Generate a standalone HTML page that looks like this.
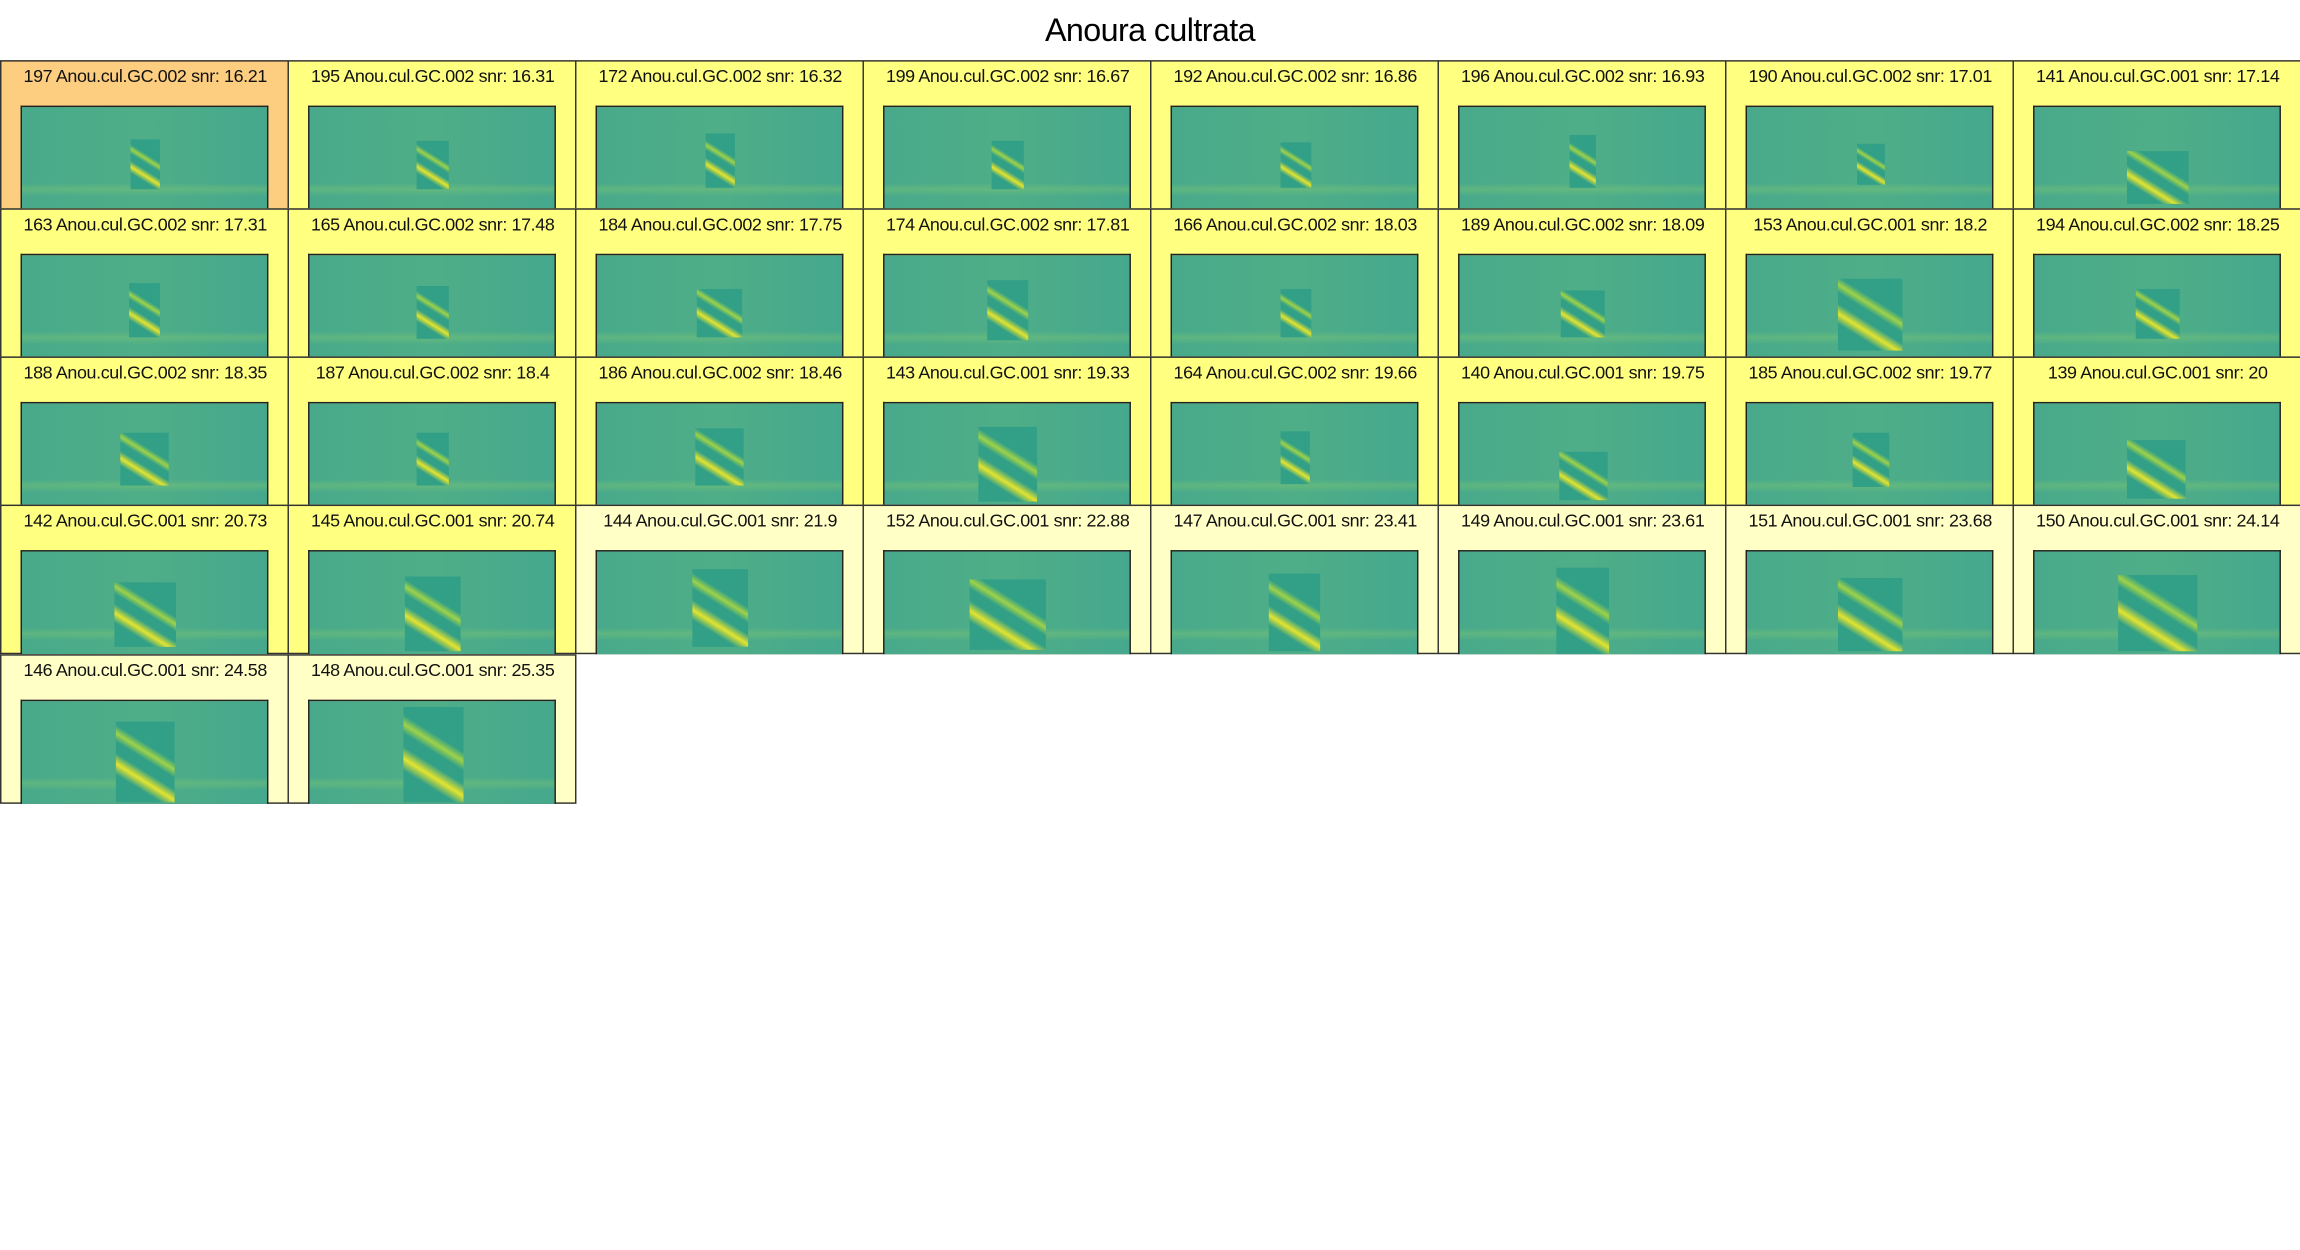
<!DOCTYPE html>
<html><head><meta charset="utf-8"><style>
html,body{margin:0;padding:0;background:#fff;width:2300px;height:1250px;overflow:hidden}
#w{position:absolute;left:0;top:0;width:1568px;height:852px;transform:scale(1.46684);transform-origin:0 0;font-family:"Liberation Sans",sans-serif}
h1{position:absolute;left:0;top:8px;width:1568px;margin:0;text-align:center;font-weight:normal;font-size:22px;color:#000;letter-spacing:-0.4px}
.c{position:absolute;width:195px;height:100px;border:0.7px solid #333;background:#ffff80}
.o{background:#fdcd80}.l{background:#ffffc6}
.t{position:absolute;left:0;top:3px;width:196px;text-align:center;font-size:12.2px;letter-spacing:-0.25px;color:#111;white-space:nowrap}
.s{position:absolute;left:13px;top:29.5px;width:167px;height:70px;border:0.7px solid #222;border-bottom:none;
background:linear-gradient(180deg,rgba(255,255,255,0) 74%,rgba(170,220,90,.22) 80%,rgba(0,0,0,0) 87%),linear-gradient(90deg,#48aa8b,#4fae88 50%,#45a88d);overflow:hidden}
.i{position:absolute;background:
linear-gradient(32deg,rgba(0,0,0,0) 24%,#e4e42e 33%,rgba(0,0,0,0) 42%),
linear-gradient(32deg,rgba(0,0,0,0) 52%,#9fd248 59%,rgba(0,0,0,0) 66%),
#32a087}
</style></head><body><div id="w">
<h1>Anoura cultrata</h1>

<div class="c o" style="left:0;top:41px"><div class="t">197 Anou.cul.GC.002 snr: 16.21</div><div class="s"><div class="i" style="left:74px;top:22px;width:20px;height:34px"></div></div></div>
<div class="c" style="left:196px;top:41px"><div class="t">195 Anou.cul.GC.002 snr: 16.31</div><div class="s"><div class="i" style="left:73px;top:23px;width:22px;height:33px"></div></div></div>
<div class="c" style="left:392px;top:41px"><div class="t">172 Anou.cul.GC.002 snr: 16.32</div><div class="s"><div class="i" style="left:74px;top:18px;width:20px;height:37px"></div></div></div>
<div class="c" style="left:588px;top:41px"><div class="t">199 Anou.cul.GC.002 snr: 16.67</div><div class="s"><div class="i" style="left:73px;top:23px;width:22px;height:33px"></div></div></div>
<div class="c" style="left:784px;top:41px"><div class="t">192 Anou.cul.GC.002 snr: 16.86</div><div class="s"><div class="i" style="left:74px;top:24px;width:21px;height:31px"></div></div></div>
<div class="c" style="left:980px;top:41px"><div class="t">196 Anou.cul.GC.002 snr: 16.93</div><div class="s"><div class="i" style="left:75px;top:19px;width:18px;height:36px"></div></div></div>
<div class="c" style="left:1176px;top:41px"><div class="t">190 Anou.cul.GC.002 snr: 17.01</div><div class="s"><div class="i" style="left:75px;top:25px;width:19px;height:28px"></div></div></div>
<div class="c" style="left:1372px;top:41px"><div class="t">141 Anou.cul.GC.001 snr: 17.14</div><div class="s"><div class="i" style="left:63px;top:30px;width:42px;height:36px"></div></div></div>

<div class="c" style="left:0;top:142px"><div class="t">163 Anou.cul.GC.002 snr: 17.31</div><div class="s"><div class="i" style="left:73px;top:19px;width:21px;height:37px"></div></div></div>
<div class="c" style="left:196px;top:142px"><div class="t">165 Anou.cul.GC.002 snr: 17.48</div><div class="s"><div class="i" style="left:73px;top:21px;width:22px;height:36px"></div></div></div>
<div class="c" style="left:392px;top:142px"><div class="t">184 Anou.cul.GC.002 snr: 17.75</div><div class="s"><div class="i" style="left:68px;top:23px;width:31px;height:33px"></div></div></div>
<div class="c" style="left:588px;top:142px"><div class="t">174 Anou.cul.GC.002 snr: 17.81</div><div class="s"><div class="i" style="left:70px;top:17px;width:28px;height:41px"></div></div></div>
<div class="c" style="left:784px;top:142px"><div class="t">166 Anou.cul.GC.002 snr: 18.03</div><div class="s"><div class="i" style="left:74px;top:23px;width:21px;height:33px"></div></div></div>
<div class="c" style="left:980px;top:142px"><div class="t">189 Anou.cul.GC.002 snr: 18.09</div><div class="s"><div class="i" style="left:69px;top:24px;width:30px;height:32px"></div></div></div>
<div class="c" style="left:1176px;top:142px"><div class="t">153 Anou.cul.GC.001 snr: 18.2</div><div class="s"><div class="i" style="left:62px;top:16px;width:44px;height:49px"></div></div></div>
<div class="c" style="left:1372px;top:142px"><div class="t">194 Anou.cul.GC.002 snr: 18.25</div><div class="s"><div class="i" style="left:69px;top:23px;width:30px;height:34px"></div></div></div>

<div class="c" style="left:0;top:243px"><div class="t">188 Anou.cul.GC.002 snr: 18.35</div><div class="s"><div class="i" style="left:67px;top:20px;width:33px;height:36px"></div></div></div>
<div class="c" style="left:196px;top:243px"><div class="t">187 Anou.cul.GC.002 snr: 18.4</div><div class="s"><div class="i" style="left:73px;top:20px;width:22px;height:36px"></div></div></div>
<div class="c" style="left:392px;top:243px"><div class="t">186 Anou.cul.GC.002 snr: 18.46</div><div class="s"><div class="i" style="left:67px;top:17px;width:33px;height:39px"></div></div></div>
<div class="c" style="left:588px;top:243px"><div class="t">143 Anou.cul.GC.001 snr: 19.33</div><div class="s"><div class="i" style="left:64px;top:16px;width:40px;height:51px"></div></div></div>
<div class="c" style="left:784px;top:243px"><div class="t">164 Anou.cul.GC.002 snr: 19.66</div><div class="s"><div class="i" style="left:74px;top:19px;width:20px;height:36px"></div></div></div>
<div class="c" style="left:980px;top:243px"><div class="t">140 Anou.cul.GC.001 snr: 19.75</div><div class="s"><div class="i" style="left:68px;top:33px;width:33px;height:33px"></div></div></div>
<div class="c" style="left:1176px;top:243px"><div class="t">185 Anou.cul.GC.002 snr: 19.77</div><div class="s"><div class="i" style="left:72px;top:20px;width:25px;height:37px"></div></div></div>
<div class="c" style="left:1372px;top:243px"><div class="t">139 Anou.cul.GC.001 snr: 20</div><div class="s"><div class="i" style="left:63px;top:25px;width:40px;height:40px"></div></div></div>

<div class="c" style="left:0;top:344px"><div class="t">142 Anou.cul.GC.001 snr: 20.73</div><div class="s"><div class="i" style="left:63px;top:21px;width:42px;height:44px"></div></div></div>
<div class="c" style="left:196px;top:344px"><div class="t">145 Anou.cul.GC.001 snr: 20.74</div><div class="s"><div class="i" style="left:65px;top:17px;width:38px;height:51px"></div></div></div>
<div class="c l" style="left:392px;top:344px"><div class="t">144 Anou.cul.GC.001 snr: 21.9</div><div class="s"><div class="i" style="left:65px;top:12px;width:38px;height:53px"></div></div></div>
<div class="c l" style="left:588px;top:344px"><div class="t">152 Anou.cul.GC.001 snr: 22.88</div><div class="s"><div class="i" style="left:58px;top:19px;width:52px;height:48px"></div></div></div>
<div class="c l" style="left:784px;top:344px"><div class="t">147 Anou.cul.GC.001 snr: 23.41</div><div class="s"><div class="i" style="left:66px;top:15px;width:35px;height:53px"></div></div></div>
<div class="c l" style="left:980px;top:344px"><div class="t">149 Anou.cul.GC.001 snr: 23.61</div><div class="s"><div class="i" style="left:66px;top:11px;width:36px;height:59px"></div></div></div>
<div class="c l" style="left:1176px;top:344px"><div class="t">151 Anou.cul.GC.001 snr: 23.68</div><div class="s"><div class="i" style="left:62px;top:18px;width:44px;height:50px"></div></div></div>
<div class="c l" style="left:1372px;top:344px"><div class="t">150 Anou.cul.GC.001 snr: 24.14</div><div class="s"><div class="i" style="left:57px;top:16px;width:54px;height:52px"></div></div></div>

<div class="c l" style="left:0;top:446px"><div class="t">146 Anou.cul.GC.001 snr: 24.58</div><div class="s"><div class="i" style="left:64px;top:14px;width:40px;height:55px"></div></div></div>
<div class="c l" style="left:196px;top:446px"><div class="t">148 Anou.cul.GC.001 snr: 25.35</div><div class="s"><div class="i" style="left:64px;top:4px;width:41px;height:65px"></div></div></div>
</div></body></html>
